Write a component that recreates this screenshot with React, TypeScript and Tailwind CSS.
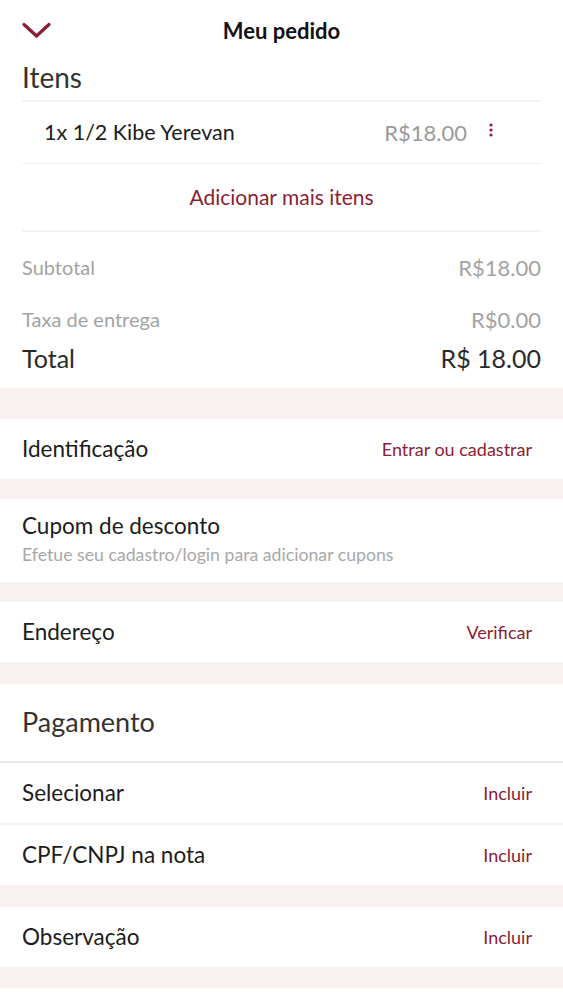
import React from "react";

const RED = "text-[#8c1d35]";

function Row({ label, action, actionSize = "text-[18px]" }: { label: string; action: string; actionSize?: string }) {
  return (
    <div className="flex items-center justify-between h-[60px] pl-[22px] pr-[31px] bg-white">
      <span className="text-[22.5px] text-[#1c1c1c]">{label}</span>
      <span className={`${actionSize} ${RED}`}>{action}</span>
    </div>
  );
}

function Band({ h }: { h: string }) {
  return <div className={`${h} bg-[#f7f2ef]`} />;
}

export default function App() {
  return (
    <div className="w-[563px] min-h-[1000px] bg-white font-['Lato','Noto_Sans',sans-serif]">
      {/* Header */}
      <div className="relative flex items-center justify-center h-[60px]">
        <svg
          className="absolute left-[22px] top-[22px]"
          width="29"
          height="17"
          viewBox="0 0 29 17"
          fill="none"
        >
          <path d="M2 2.5 L14.5 14 L27 2.5" stroke="#8c1d35" strokeWidth="3.2" strokeLinecap="round" strokeLinejoin="round" />
        </svg>
        <span className="text-[22px] font-bold text-[#111]">Meu pedido</span>
      </div>

      {/* Itens */}
      <div className="px-[22px]">
        <div className="text-[28px] leading-[34px] text-[#333] h-[40px]">Itens</div>
        <div className="h-[2px] bg-[#f3f3f3]" />
        <div className="flex items-center h-[62px] pl-[22px] border-b border-[#f0f0f0]">
          <span className="text-[21.5px] text-[#1c1c1c] flex-1">1x 1/2 Kibe Yerevan</span>
          <span className="text-[22px] text-[#9a9a9a]">R$18.00</span>
          <span className="w-[48px] mr-[26px] flex justify-center -mt-[5px]">
            <svg width="4" height="14" viewBox="0 0 4 14">
              <circle cx="2" cy="2" r="1.6" fill="#8c1d35" />
              <circle cx="2" cy="7" r="1.6" fill="#8c1d35" />
              <circle cx="2" cy="12" r="1.6" fill="#8c1d35" />
            </svg>
          </span>
        </div>
        <div className="flex items-center justify-center h-[66px]">
          <span className={`text-[21px] ${RED}`}>Adicionar mais itens</span>
        </div>
        <div className="h-[2px] bg-[#f3f3f3]" />
        <div className="flex items-center justify-between h-[70px]">
          <span className="text-[20px] text-[#a3a3a3]">Subtotal</span>
          <span className="text-[22px] text-[#a3a3a3]">R$18.00</span>
        </div>
        <div className="flex items-center justify-between h-[34px]">
          <span className="text-[20px] text-[#a3a3a3]">Taxa de entrega</span>
          <span className="text-[22px] text-[#a3a3a3]">R$0.00</span>
        </div>
        <div className="flex items-center justify-between h-[46px] mb-[6px]">
          <span className="text-[25px] text-[#2a2a2a]">Total</span>
          <span className="text-[25px] text-[#2a2a2a]">R$ 18.00</span>
        </div>
      </div>

      <Band h="h-[31px]" />
      <Row label="Identificação" action="Entrar ou cadastrar" />
      <Band h="h-[20px]" />
      <div className="bg-white h-[83px] px-[22px] flex flex-col justify-center">
        <span className="text-[22.5px] leading-[28px] text-[#1c1c1c]">Cupom de desconto</span>
        <span className="text-[17.7px] leading-[30px] text-[#a8a8a8]">
          Efetue seu cadastro/login para adicionar cupons
        </span>
      </div>
      <Band h="h-[20px]" />
      <Row label="Endereço" action="Verificar" />
      <Band h="h-[22px]" />
      <div className="h-[79px] px-[22px] flex items-center border-b-2 border-[#e6e6e6]">
        <span className="text-[27px] text-[#333]">Pagamento</span>
      </div>
      <Row label="Selecionar" action="Incluir" />
      <div className="h-[2px] bg-[#f3f3f3]" />
      <Row label="CPF/CNPJ na nota" action="Incluir" />
      <Band h="h-[22px]" />
      <Row label="Observação" action="Incluir" />
      <Band h="h-[21px]" />
    </div>
  );
}
